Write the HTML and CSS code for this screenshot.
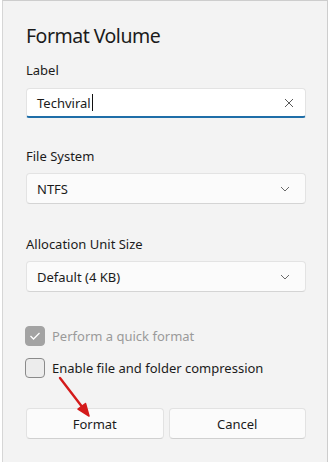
FILE: index.html
```html
<!DOCTYPE html>
<html>
<head>
<meta charset="utf-8">
<link rel="stylesheet" href="styles.css">
</head>
<body>
<div class="dialog">
  <h1 class="title">Format Volume</h1>
  <div class="field f1">
    <div class="label">Label</div>
    <div class="textbox">
      <span class="value">Techviral<span class="caret"></span></span>
      <svg class="clear" width="10" height="10" viewBox="0 0 10 10"><path d="M1 1L9 9M9 1L1 9" stroke="#5a5a5a" stroke-width="1" fill="none"/></svg>
    </div>
  </div>
  <div class="field f2">
    <div class="label">File System</div>
    <div class="select">
      <span class="value">NTFS</span>
      <svg class="chev" width="10" height="6" viewBox="0 0 10 6"><path d="M1 1L5 5L9 1" stroke="#6a6a6a" stroke-width="1" fill="none"/></svg>
    </div>
  </div>
  <div class="field f3">
    <div class="label">Allocation Unit Size</div>
    <div class="select">
      <span class="value">Default (4 KB)</span>
      <svg class="chev" width="10" height="6" viewBox="0 0 10 6"><path d="M1 1L5 5L9 1" stroke="#6a6a6a" stroke-width="1" fill="none"/></svg>
    </div>
  </div>
  <div class="checks">
    <div class="check disabled">
      <span class="box checked"><svg width="12" height="10" viewBox="0 0 12 10"><path d="M1.5 5L4.5 8L10.5 2" stroke="#fff" stroke-width="1.3" fill="none"/></svg></span>
      <span class="ctext">Perform a quick format</span>
    </div>
    <div class="check">
      <span class="box"></span>
      <span class="ctext">Enable file and folder compression</span>
    </div>
  </div>
  <div class="buttons">
    <div class="btn">Format</div>
    <div class="btn">Cancel</div>
  </div>
  <svg class="arrow" width="330" height="462" viewBox="0 0 330 462">
    <line x1="60" y1="378" x2="83" y2="408" stroke="#d41a1a" stroke-width="2.4" stroke-linecap="round"/>
    <path d="M89 416L85.5 403.5L78 409Z" fill="#d41a1a" stroke="#d41a1a" stroke-width="1.5" stroke-linejoin="round"/>
  </svg>
</div>
</body>
</html>
```
FILE: styles.css
```css
html, body {
  margin: 0;
  padding: 0;
  background: #ffffff;
}
body {
  width: 330px;
  height: 462px;
  overflow: hidden;
  font-family: "Noto Sans", "Open Sans", sans-serif;
  color: #1b1b1b;
}
.dialog {
  position: relative;
  box-sizing: border-box;
  margin-left: 2px;
  width: 326px;
  height: 462px;
  background: #f3f3f3;
  border-top: 1px solid #cdcdcd;
  border-left: 1px solid #d6d6d6;
  border-right: 1px solid #cdcdcd;
  padding: 21px 21px 0 23px;
}
.title {
  margin: 0;
  font-size: 19.5px;
  font-weight: 400;
  line-height: 28px;
  letter-spacing: -0.5px;
}
.f1 {
  margin-top: 10px;
}
.f2 {
  margin-top: 28px;
}
.f3 {
  margin-top: 30px;
}
.label {
  font-size: 13px;
  line-height: 20px;
  margin-bottom: 7px;
}
.f1 .label {
  margin-bottom: 8px;
}
.textbox, .select {
  box-sizing: border-box;
  height: 31px;
  background: #fdfdfd;
  border: 1px solid #e3e3e3;
  border-radius: 4px;
  display: flex;
  align-items: center;
  justify-content: space-between;
  padding: 0 11px 0 10px;
  font-size: 13px;
}
.textbox {
  height: 30px;
  background: #ffffff;
  border-bottom: 2px solid #1f6ea8;
  border-radius: 4px 4px 3px 3px;
}
.select {
  background: #fbfbfb;
  border-bottom-color: #d4d4d4;
}
.value {
  display: inline-flex;
  align-items: center;
}
.caret {
  display: inline-block;
  width: 1px;
  height: 17px;
  background: #111;
  margin-left: 1px;
}
.chev {
  margin-right: 4px;
}
.checks {
  margin-top: 34px;
  display: flex;
  flex-direction: column;
  gap: 12px;
}
.check {
  display: flex;
  align-items: center;
  gap: 7px;
  font-size: 13px;
  line-height: 20px;
}
.box {
  box-sizing: border-box;
  width: 20px;
  height: 20px;
  margin-left: -1px;
  border-radius: 4px;
  border: 1px solid #8a8a8a;
  background: #ececec;
  display: flex;
  align-items: center;
  justify-content: center;
}
.box.checked {
  background: #a3a3a3;
  border-color: #a3a3a3;
}
.disabled .ctext {
  color: #9a9a9a;
}
.buttons {
  margin-top: 30px;
  display: grid;
  grid-template-columns: 1fr 1fr;
  gap: 5px;
}
.btn {
  box-sizing: border-box;
  height: 31px;
  background: #fbfbfb;
  border: 1px solid #e2e2e2;
  border-bottom-color: #d0d0d0;
  border-radius: 4px;
  display: flex;
  align-items: center;
  justify-content: center;
  font-size: 13px;
}
.arrow {
  position: absolute;
  left: -3px;
  top: -1px;
  pointer-events: none;
}
```
